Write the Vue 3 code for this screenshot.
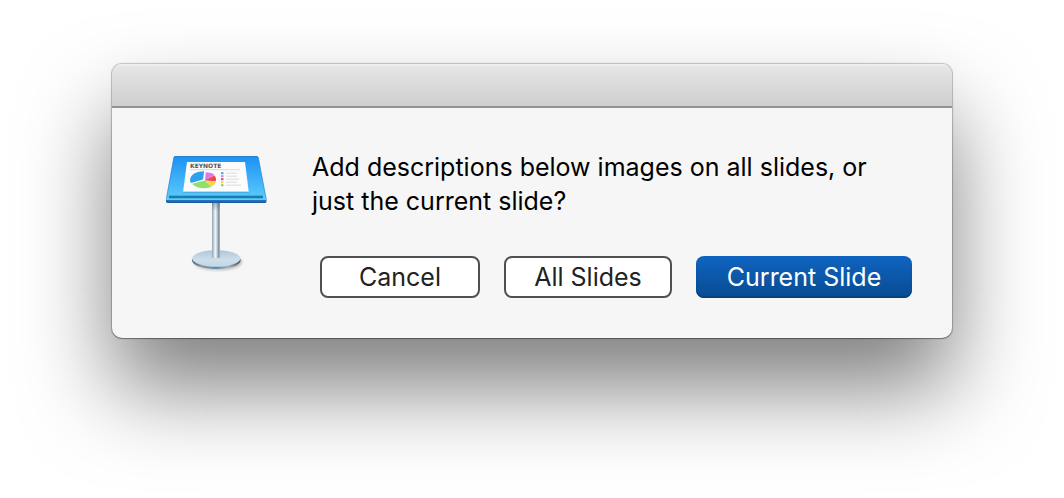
<script setup>
const actions = [
  { label: 'Cancel', kind: 'cancel' },
  { label: 'All Slides', kind: 'all' },
  { label: 'Current Slide', kind: 'primary' },
]

const legend = [
  { y: 25, color: '#35a9ee', width: 11 },
  { y: 28, color: '#d97af0', width: 11 },
  { y: 31, color: '#f4464f', width: 13 },
  { y: 34, color: '#ffd43f', width: 11 },
  { y: 37, color: '#7fd858', width: 15 },
]
</script>

<template>
  <main class="desktop">
    <section class="dialog" role="alertdialog" aria-labelledby="message">
      <header class="titlebar"></header>
      <div class="body">
        <svg class="app-icon" viewBox="0 0 128 128" aria-hidden="true">
          <defs>
            <linearGradient id="board" x1="0" y1="0" x2="0" y2="1">
              <stop offset="0" stop-color="#1b91f4" />
              <stop offset="1" stop-color="#5dcdfd" />
            </linearGradient>
            <linearGradient id="lip" x1="0" y1="0" x2="0" y2="1">
              <stop offset="0" stop-color="#2487c9" />
              <stop offset="1" stop-color="#1d559c" />
            </linearGradient>
            <linearGradient id="pole" x1="0" y1="0" x2="1" y2="0">
              <stop offset="0" stop-color="#919da5" />
              <stop offset="0.25" stop-color="#cbdbe5" />
              <stop offset="0.45" stop-color="#edf5fa" />
              <stop offset="0.65" stop-color="#b8c8d5" />
              <stop offset="0.8" stop-color="#8696a5" />
              <stop offset="1" stop-color="#b9aea6" />
            </linearGradient>
            <linearGradient id="poleshade" x1="0" y1="0" x2="0" y2="1">
              <stop offset="0" stop-color="#456078" stop-opacity="0.45" />
              <stop offset="1" stop-color="#456078" stop-opacity="0" />
            </linearGradient>
            <linearGradient id="foot" x1="0" y1="0" x2="0" y2="1">
              <stop offset="0" stop-color="#adc7db" />
              <stop offset="0.6" stop-color="#cddfea" />
              <stop offset="1" stop-color="#c3d6e3" />
            </linearGradient>
            <linearGradient id="rim" x1="0" y1="0" x2="1" y2="0">
              <stop offset="0" stop-color="#566b7c" />
              <stop offset="0.2" stop-color="#829caf" />
              <stop offset="0.5" stop-color="#5f88a6" />
              <stop offset="0.75" stop-color="#9bb2c3" />
              <stop offset="1" stop-color="#5b5552" />
            </linearGradient>
            <filter id="soft" x="-20%" y="-50%" width="140%" height="200%">
              <feGaussianBlur stdDeviation="1.5" />
            </filter>
          </defs>
          <ellipse cx="66" cy="114" rx="24" ry="8" fill="#000" opacity="0.25" filter="url(#soft)" />
          <ellipse cx="64.3" cy="112.3" rx="24.3" ry="8.7" fill="url(#rim)" />
          <ellipse cx="64.3" cy="110.4" rx="24" ry="8.4" fill="url(#foot)" />
          <path d="M60 54h8v55.500q-4 1.500-8 0z" fill="url(#pole)" />
          <path d="M60 54h8v9h-8z" fill="url(#poleshade)" />
          <path d="M14 51h100.500v2.500q0 1.500-2 1.500h-96.500q-2 0-2-1.500z" fill="url(#lip)" />
          <path d="M23.500 8h81q1.500 0 1.800 1.500l8.200 42.500h-100.500l7.700-42.500q.3-1.500 1.800-1.500z" fill="url(#board)" />
          <path d="M22.500 8.500h83" stroke="#2b77bd" stroke-width="0.8" />
          <path d="M22 9l-7.700 42M106.200 9l8 42" stroke="#1c78bd" stroke-width="0.8" opacity="0.7" />
          <path d="M17 47.700h94v2.600h-94z" fill="#187caf" />
          <path d="M17 47.300h94" stroke="#4ba9dc" stroke-width="0.6" />
          <path d="M35 14h58l3.700 29.800h-65.600z" fill="#fcfcfc" />
          <path d="M31 44.200h66" stroke="#3886b8" stroke-width="0.8" opacity="0.6" />
          <text x="38" y="20" class="icon-title">KEYNOTE</text>
          <path d="M38 21.700h50" stroke="#c4c4c4" stroke-width="0.6" />
          <path d="M53 32.500l.8-8.300q6 .1 8.800 2.800z" fill="#d97af0" />
          <path d="M52.500 32.500l9.800-5q2.400 2.300 1.500 5.700z" fill="#f4464f" />
          <path d="M52.500 32.500l11.300.7q-.8 3.800-4.500 5.400z" fill="#ffd43f" />
          <path d="M52.500 32.500l6.800 6.200q-4 1.900-8.600 1.500-7.500-.6-10.500-4.500z" fill="#8fdf68" />
          <path d="M51 31.500l1.200-8.200c-7.500 0-14 3.400-14.200 8.500 0 1.200.3 2.300.9 3.300z" fill="#2fa1ec" />
          <g v-for="item in legend" :key="item.y">
            <rect x="69" :y="item.y - 0.8" width="2.500" height="2" :fill="item.color" />
            <path :d="`M74 ${item.y + 0.2}h${item.width}`" class="legend-line" />
          </g>
        </svg>
        <div class="content">
          <p id="message" class="message">Add descriptions below images on all slides, or just the current slide?</p>
          <div class="actions">
            <button v-for="action in actions" :key="action.kind" type="button" :class="['button', action.kind]">
              {{ action.label }}
            </button>
          </div>
        </div>
      </div>
    </section>
  </main>
</template>

<style>
body {
  margin: 0;
  background: #fff;
}
</style>

<style scoped>
.desktop {
  box-sizing: border-box;
  min-height: 100vh;
  padding: 64px 112px;
  overflow: hidden;
  font-family: Inter, "Liberation Sans", sans-serif;
}

.dialog {
  overflow: hidden;
  border-radius: 10px;
  background: #f6f6f6;
  box-shadow:
    0 0 1px 1px rgba(0, 0, 0, 0.22),
    0 1px 1px rgba(0, 0, 0, 0.25),
    0 50px 88px rgba(0, 0, 0, 0.5);
}

.titlebar {
  box-sizing: border-box;
  height: 44px;
  border-bottom: 2px solid #929292;
  background: linear-gradient(#e7e7e7, #cfcfcf);
  box-shadow: inset 0 2px 0 #eeeeee;
}

.body {
  display: flex;
  align-items: flex-start;
  gap: 32px;
  padding: 40px;
}

.app-icon {
  flex: none;
  width: 128px;
  height: 128px;
}

.icon-title {
  font-family: "DejaVu Sans", sans-serif;
  font-size: 6px;
  font-weight: 700;
  fill: #555;
}

.legend-line {
  stroke: #d2d2d8;
  stroke-width: 0.8;
}

.content {
  flex: 1;
  padding-top: 2px;
}

.message {
  margin: 0 0 38px;
  color: #000;
  font-size: 25px;
  line-height: 34px;
}

.actions {
  display: flex;
  justify-content: flex-end;
  gap: 24px;
}

.button {
  box-sizing: border-box;
  min-width: 160px;
  height: 42px;
  padding: 0 24px;
  border: 2px solid #505050;
  border-radius: 8px;
  background: #fff;
  color: #222;
  font-family: inherit;
  font-size: 25px;
  line-height: 38px;
  white-space: nowrap;
}

.all {
  min-width: 168px;
}

.primary {
  min-width: 216px;
  border: 0;
  background: linear-gradient(#0f64c1, #084b91);
  box-shadow: inset 0 -2px 1px #07427f;
  color: #fff;
}
</style>
